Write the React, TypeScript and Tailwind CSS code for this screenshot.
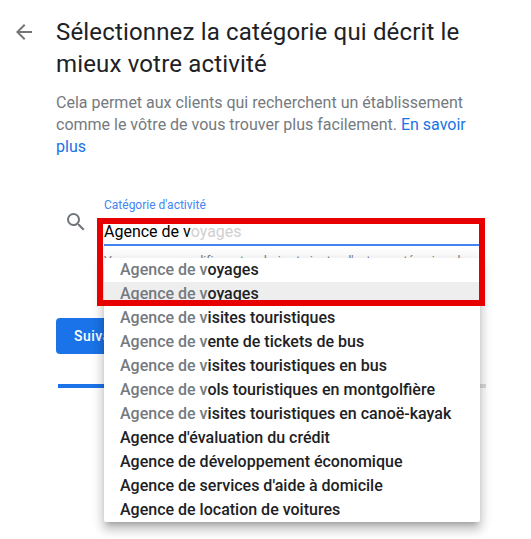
import React from "react";

const suggestions: { typed: string; rest: string; active?: boolean }[] = [
  { typed: "Agence de v", rest: "oyages" },
  { typed: "Agence de v", rest: "oyages", active: true },
  { typed: "Agence de v", rest: "isites touristiques" },
  { typed: "Agence de v", rest: "ente de tickets de bus" },
  { typed: "Agence de v", rest: "isites touristiques en bus" },
  { typed: "Agence de v", rest: "ols touristiques en montgolfière" },
  { typed: "Agence de v", rest: "isites touristiques en canoë-kayak" },
  { typed: "", rest: "Agence d'évaluation du crédit" },
  { typed: "", rest: "Agence de développement économique" },
  { typed: "", rest: "Agence de services d'aide à domicile" },
  { typed: "", rest: "Agence de location de voitures" },
];

function Suggestions() {
  return (
    <ul className="absolute top-[62px] left-0 w-[376px] rounded-b-[2px] bg-white text-base font-medium text-[#202124] shadow-[0_5px_5px_-3px_rgba(0,0,0,0.2),0_8px_10px_1px_rgba(0,0,0,0.14),0_3px_14px_2px_rgba(0,0,0,0.12)]">
      {suggestions.map((s, i) => (
        <li
          key={i}
          className={"h-6 pl-4 leading-6 whitespace-nowrap " + (s.active ? "bg-[#eeeeee]" : "")}
        >
          <span className="text-[#757a80]">{s.typed}</span>
          {s.rest}
        </li>
      ))}
    </ul>
  );
}

export default function App() {
  return (
    <main className="h-[539px] w-[531px] overflow-hidden bg-white font-[Roboto,sans-serif] text-[#202124]">
      <header className="flex pt-4">
        <div className="w-14 shrink-0 pt-1 pl-3">
          <svg className="size-6" viewBox="0 0 24 24" fill="#757575">
            <path d="M20 11H7.83l5.59-5.59L12 4l-8 8 8 8 1.41-1.41L7.83 13H20v-2z" />
          </svg>
        </div>
        <div>
          <h1 className="text-2xl leading-8 tracking-[0.16px] whitespace-nowrap">
            Sélectionnez la catégorie qui décrit le
            <br />
            mieux votre activité
          </h1>
          <p className="mt-3 text-base leading-[22px] whitespace-nowrap text-[#757a80]">
            Cela permet aux clients qui recherchent un établissement
            <br />
            comme le vôtre de vous trouver plus facilement.{" "}
            <a className="text-[#1a73e8]">
              En savoir
              <br />
              plus
            </a>
          </p>
        </div>
      </header>
      <section className="mt-[38px] flex">
        <div className="w-[104px] shrink-0 pt-[14px] pl-16">
          <svg className="size-6" viewBox="0 0 24 24" fill="#6f757b">
            <path d="M15.5 14h-.79l-.28-.27A6.47 6.47 0 0 0 16 9.5 6.5 6.5 0 1 0 9.5 16c1.61 0 3.09-.59 4.23-1.57l.27.28v.79l5 4.99L20.49 19l-4.99-5zm-6 0C7.01 14 5 11.99 5 9.5S7.01 5 9.5 5 14 7.01 14 9.5 11.99 14 9.5 14z" />
          </svg>
        </div>
        <div className="relative h-[122px] w-[376px]">
          <label className="block h-[26px] text-xs leading-[18px] text-[#4285f4]">Catégorie d'activité</label>
          <div className="h-6 border-b-2 border-[#4285f4] text-base leading-[20px] whitespace-nowrap text-black">
            Agence de v<span className="text-[#d0d0d0]">oyages</span>
          </div>
          <p className="mt-[7px] h-8 text-xs leading-4 tracking-[0.1px] text-[#757a80]">
            Vous pourrez modifier votre choix et ajouter d'autres catégories plus tard.
          </p>
          <Suggestions />
          <div className="absolute top-[22px] -left-[7px] h-[88px] w-[388px] border-[6px] border-[#e60000]" />
        </div>
      </section>
      <footer className="pl-14">
        <button className="h-9 w-[100px] rounded bg-[#1a73e8] pl-[18px] text-left text-sm font-medium tracking-[0.5px] text-white">
          Suivant
        </button>
        <div className="mt-[30px] ml-[2px] flex h-1 w-[428px] bg-[#dadada]">
          <div className="w-[214px] bg-[#1a73e8]" />
        </div>
      </footer>
    </main>
  );
}
